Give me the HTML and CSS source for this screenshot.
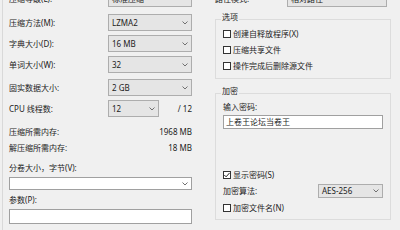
FILE: index.html
```html
<!DOCTYPE html>
<html lang="zh-CN">
<head>
<meta charset="utf-8">
<link rel="stylesheet" href="styles.css">
</head>
<body>
<div class="dialog">
  <div class="left">
    <div class="row row-top"><span class="lbl">压缩等级(L):</span><div class="combo"><span>标准压缩</span><svg class="chev" width="6" height="4" viewBox="0 0 6 4"><path d="M0.5 0.5 L3 3 L5.5 0.5"/></svg></div></div>
    <div class="row"><span class="lbl">压缩方法(M):</span><div class="combo"><span>LZMA2</span><svg class="chev" width="6" height="4" viewBox="0 0 6 4"><path d="M0.5 0.5 L3 3 L5.5 0.5"/></svg></div></div>
    <div class="row"><span class="lbl">字典大小(D):</span><div class="combo"><span>16 MB</span><svg class="chev" width="6" height="4" viewBox="0 0 6 4"><path d="M0.5 0.5 L3 3 L5.5 0.5"/></svg></div></div>
    <div class="row"><span class="lbl">单词大小(W):</span><div class="combo"><span>32</span><svg class="chev" width="6" height="4" viewBox="0 0 6 4"><path d="M0.5 0.5 L3 3 L5.5 0.5"/></svg></div></div>
    <div class="row row-solid"><span class="lbl">固实数据大小:</span><div class="combo"><span>2 GB</span><svg class="chev" width="6" height="4" viewBox="0 0 6 4"><path d="M0.5 0.5 L3 3 L5.5 0.5"/></svg></div></div>
    <div class="row"><span class="lbl">CPU 线程数:</span><div class="combo combo-cpu"><span>12</span><svg class="chev" width="6" height="4" viewBox="0 0 6 4"><path d="M0.5 0.5 L3 3 L5.5 0.5"/></svg></div><span class="val">/ 12</span></div>
    <div class="info info-first"><span>压缩所需内存:</span><span>1968 MB</span></div>
    <div class="info"><span>解压缩所需内存:</span><span>18 MB</span></div>
    <div class="caption cap-vol">分卷大小，字节(V):</div>
    <div class="combo combo-edit"><span></span><svg class="chev" width="6" height="4" viewBox="0 0 6 4"><path d="M0.5 0.5 L3 3 L5.5 0.5"/></svg></div>
    <div class="caption cap-param">参数(P):</div>
    <div class="field field-param"></div>
  </div>
  <div class="right">
    <div class="row row-top"><span class="lbl-r">路径模式:</span><div class="combo combo-path"><span>相对路径</span><svg class="chev" width="6" height="4" viewBox="0 0 6 4"><path d="M0.5 0.5 L3 3 L5.5 0.5"/></svg></div></div>
    <fieldset class="group group-opts">
      <legend>选项</legend>
      <div class="check"><span class="box"></span><span>创建自释放程序(X)</span></div>
      <div class="check"><span class="box"></span><span>压缩共享文件</span></div>
      <div class="check"><span class="box"></span><span>操作完成后删除源文件</span></div>
    </fieldset>
    <fieldset class="group group-enc">
      <legend>加密</legend>
      <div class="caption cap-pw">输入密码:</div>
      <div class="field field-pw">上卷王论坛当卷王</div>
      <div class="check check-show"><span class="box"><svg width="8" height="8" viewBox="0 0 8 8"><path d="M1.3 4 L3.1 5.8 L6.6 1.9"/></svg></span><span>显示密码(S)</span></div>
      <div class="alg"><span>加密算法:</span><div class="combo combo-alg"><span>AES-256</span><svg class="chev" width="6" height="4" viewBox="0 0 6 4"><path d="M0.5 0.5 L3 3 L5.5 0.5"/></svg></div></div>
      <div class="check check-names"><span class="box"></span><span>加密文件名(N)</span></div>
    </fieldset>
  </div>
</div>
</body>
</html>
```
FILE: styles.css
```css
html, body {
  margin: 0;
  padding: 0;
  background: #f0f0f0;
}
body {
  font-family: "Noto Sans", "Noto Sans CJK SC", sans-serif;
  font-size: 8px;
  line-height: 10px;
  color: #1c1c1c;
}
.dialog {
  display: flex;
  height: 230px;
  overflow: hidden;
  margin-left: 2px;
  border-left: 1px solid #d9d9d9;
}
.left {
  width: 183px;
  margin-left: 6px;
  margin-top: -10px;
  display: flex;
  flex-direction: column;
}
.row {
  display: flex;
  align-items: center;
  height: 17px;
  margin-bottom: 4px;
  flex-shrink: 0;
}
.row-top {
  margin-bottom: 7px;
}
.row-solid {
  margin-top: 2px;
}
.lbl {
  width: 99px;
  flex-shrink: 0;
}
.combo {
  box-sizing: border-box;
  width: 84px;
  height: 17px;
  border: 1px solid #adadad;
  background: #e5e5e5;
  display: flex;
  align-items: center;
  justify-content: space-between;
  padding: 0 3px 0 3px;
  flex-shrink: 0;
}
.chev {
  display: block;
}
.chev path {
  fill: none;
  stroke: #707070;
  stroke-width: 1;
}
.combo-cpu {
  width: 51px;
}
.val {
  margin-left: auto;
}
.info {
  display: flex;
  justify-content: space-between;
  align-items: center;
  height: 16px;
  flex-shrink: 0;
}
.info-first {
  margin-top: 3px;
}
.caption {
  height: 10px;
  flex-shrink: 0;
}
.cap-vol {
  margin-top: 7px;
}
.combo-edit {
  width: 183px;
  height: 13px;
  margin-top: 4px;
  background: #fff;
  border-color: #a0a0a0;
}
.cap-param {
  margin-top: 5px;
}
.field {
  box-sizing: border-box;
  background: #fff;
  border: 1px solid #a0a0a0;
  flex-shrink: 0;
}
.field-param {
  width: 183px;
  height: 15px;
  margin-top: 4px;
}
.right {
  width: 176px;
  margin-left: 23px;
  margin-top: -10px;
  display: flex;
  flex-direction: column;
}
.right .row-top {
  margin-bottom: 1px;
}
.lbl-r {
  width: 72px;
  flex-shrink: 0;
}
.combo-path {
  width: 100px;
}
.group {
  margin: 0;
  border: 1px solid #dcdcdc;
  padding: 0 7px;
  min-width: 0;
  display: flex;
  flex-direction: column;
}
.group legend {
  padding: 0 1px 4px 1px;
  margin-left: -2px;
  line-height: 10px;
}
.group-opts {
  margin-top: 4px;
  padding-bottom: 4px;
}
.check {
  display: flex;
  align-items: center;
  height: 16px;
  flex-shrink: 0;
}
.box {
  box-sizing: border-box;
  width: 8px;
  height: 8px;
  border: 1px solid #333;
  background: #fff;
  margin-right: 2px;
  flex-shrink: 0;
  display: flex;
  align-items: center;
  justify-content: center;
}
.box svg {
  display: block;
  flex-shrink: 0;
}
.box svg path {
  fill: none;
  stroke: #222;
  stroke-width: 1;
}
.group-enc {
  margin-top: 7px;
  padding-bottom: 3px;
}
.cap-pw {
  margin-top: 2px;
}
.field-pw {
  height: 14px;
  margin-top: 3px;
  padding-left: 2px;
  line-height: 12px;
  font-size: 8px;
}
.check-show {
  margin-top: 38px;
}
.alg {
  display: flex;
  align-items: center;
  justify-content: space-between;
  height: 14px;
  margin-top: 1px;
  flex-shrink: 0;
}
.combo-alg {
  width: 65px;
  height: 14px;
}
.check-names {
  margin-top: 2px;
}
```
